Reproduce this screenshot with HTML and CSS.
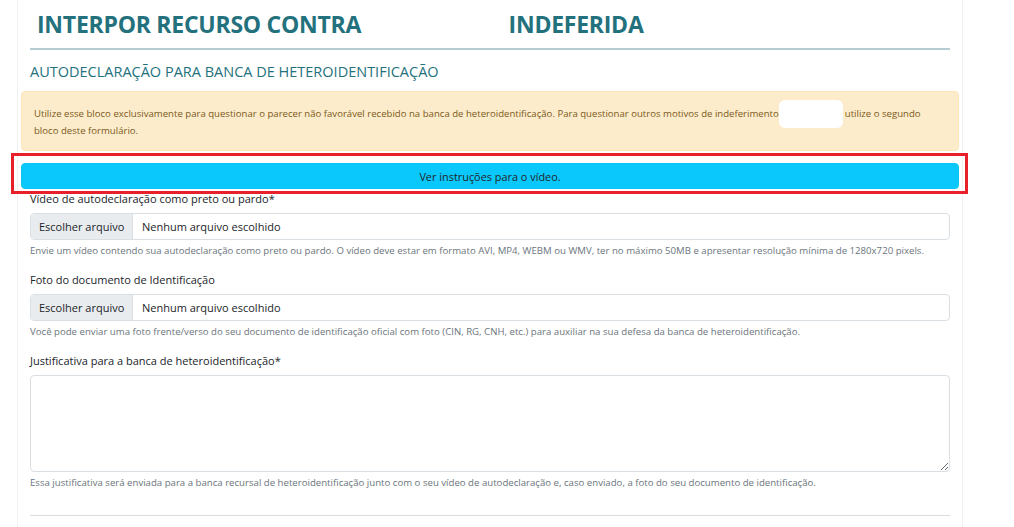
FILE: index.html
```html
<!DOCTYPE html>
<html lang="pt-BR">
<head>
<meta charset="utf-8">
<title>Interpor recurso</title>
<link rel="stylesheet" href="styles.css">
</head>
<body>
<main class="card">
  <h1 class="page-title">INTERPOR RECURSO CONTRA <span class="blank"></span> INDEFERIDA</h1>
  <hr class="rule">
  <h2 class="section-title">AUTODECLARAÇÃO PARA BANCA DE HETEROIDENTIFICAÇÃO</h2>

  <div class="alert">
    Utilize esse bloco exclusivamente para questionar o parecer não favorável recebido na banca de heteroidentificação. Para questionar outros motivos de indeferimento<span class="mask"></span>utilize o segundo bloco deste formulário.
  </div>

  <div class="btn-wrap">
    <button class="btn-info" type="button">Ver instruções para o vídeo.</button>
    <span class="highlight"></span>
  </div>

  <div class="field">
    <label class="label">Vídeo de autodeclaração como preto ou pardo*</label>
    <div class="file-input"><span class="file-btn">Escolher arquivo</span><span class="file-name">Nenhum arquivo escolhido</span></div>
    <p class="help">Envie um vídeo contendo sua autodeclaração como preto ou pardo. O vídeo deve estar em formato AVI, MP4, WEBM ou WMV, ter no máximo 50MB e apresentar resolução mínima de 1280x720 pixels.</p>
  </div>

  <div class="field">
    <label class="label">Foto do documento de Identificação</label>
    <div class="file-input"><span class="file-btn">Escolher arquivo</span><span class="file-name">Nenhum arquivo escolhido</span></div>
    <p class="help">Você pode enviar uma foto frente/verso do seu documento de identificação oficial com foto (CIN, RG, CNH, etc.) para auxiliar na sua defesa da banca de heteroidentificação.</p>
  </div>

  <div class="field">
    <label class="label">Justificativa para a banca de heteroidentificação*</label>
    <textarea class="textarea"></textarea>
    <p class="help">Essa justificativa será enviada para a banca recursal de heteroidentificação junto com o seu vídeo de autodeclaração e, caso enviado, a foto do seu documento de identificação.</p>
  </div>

  <hr class="rule rule-bottom">
</main>
</body>
</html>
```

FILE: styles.css
```css
* { box-sizing: border-box; }

html, body {
  margin: 0;
  background: #ffffff;
  font-family: "Open Sans", "Noto Sans", sans-serif;
  color: #212529;
  overflow: hidden;
}

.card {
  margin-left: 17px;
  width: 946px;
  height: 527px;
  padding: 0 12px;
  border-left: 1px solid #f1f1f1;
  border-right: 1px solid #f1f1f1;
}

.page-title {
  margin: 0;
  padding: 8px 0 0 7px;
  height: 48px;
  font-size: 23px;
  font-weight: 700;
  letter-spacing: -0.25px;
  color: #23717d;
  line-height: 32px;
  white-space: nowrap;
}

.blank {
  display: inline-block;
  width: 136px;
}

.rule {
  margin: 0;
  border: 0;
  border-top: 2px solid #b7ccd2;
}

.section-title {
  margin: 0;
  padding-top: 12px;
  height: 41px;
  font-size: 14.5px;
  font-weight: 400;
  color: #23717d;
  line-height: 20px;
}

.alert {
  margin: 0 -9px;
  padding: 13px 12px 11px;
  background: #fdeccb;
  border: 1px solid #fde6b9;
  border-radius: 4px;
  font-size: 9.6px;
  line-height: 17px;
  color: #7a5a1c;
}

/* blanked-out word inside the notice; zero-height margin box keeps the line box intact */
.mask {
  display: inline-block;
  width: 64px;
  height: 28px;
  margin: -14px 2px -14px 0;
  vertical-align: middle;
  background: #ffffff;
  border-radius: 6px;
}

.btn-wrap {
  position: relative;
  margin: 12px -9px 0;
}

.btn-info {
  display: block;
  width: 100%;
  height: 26px;
  padding: 0;
  border: 1px solid #0bc6f5;
  border-radius: 4px;
  background: #0ac8fc;
  font-family: inherit;
  font-size: 10.9px;
  color: #212529;
}

/* red annotation frame drawn over the button */
.highlight {
  position: absolute;
  left: -10px;
  top: -10px;
  right: -9px;
  bottom: -5px;
  border: 3px solid #e8202a;
  pointer-events: none;
}

.field {
  margin-top: 2px;
}

.field + .field {
  margin-top: 14px;
}

.label {
  display: block;
  font-size: 11px;
  line-height: 16px;
  margin-bottom: 6px;
}

.file-input {
  display: flex;
  height: 27px;
  border: 1px solid #dadfe4;
  border-radius: 4px;
  overflow: hidden;
  font-size: 11px;
  line-height: 25px;
}

.file-btn {
  width: 102px;
  padding-left: 8px;
  background: #e9ecef;
  border-right: 1px solid #dadfe4;
  color: #212529;
}

.file-name {
  padding-left: 9px;
}

.help {
  margin: 4px 0 0;
  font-size: 9.65px;
  line-height: 14px;
  color: #6c757d;
  white-space: nowrap;
}

.textarea {
  display: block;
  width: 100%;
  height: 97px;
  border: 1px solid #dadfe4;
  border-radius: 4px;
  resize: vertical;
  font-family: inherit;
}

.rule-bottom {
  margin-top: 25px;
  border-top: 1px solid #dcdcdc;
}
```
